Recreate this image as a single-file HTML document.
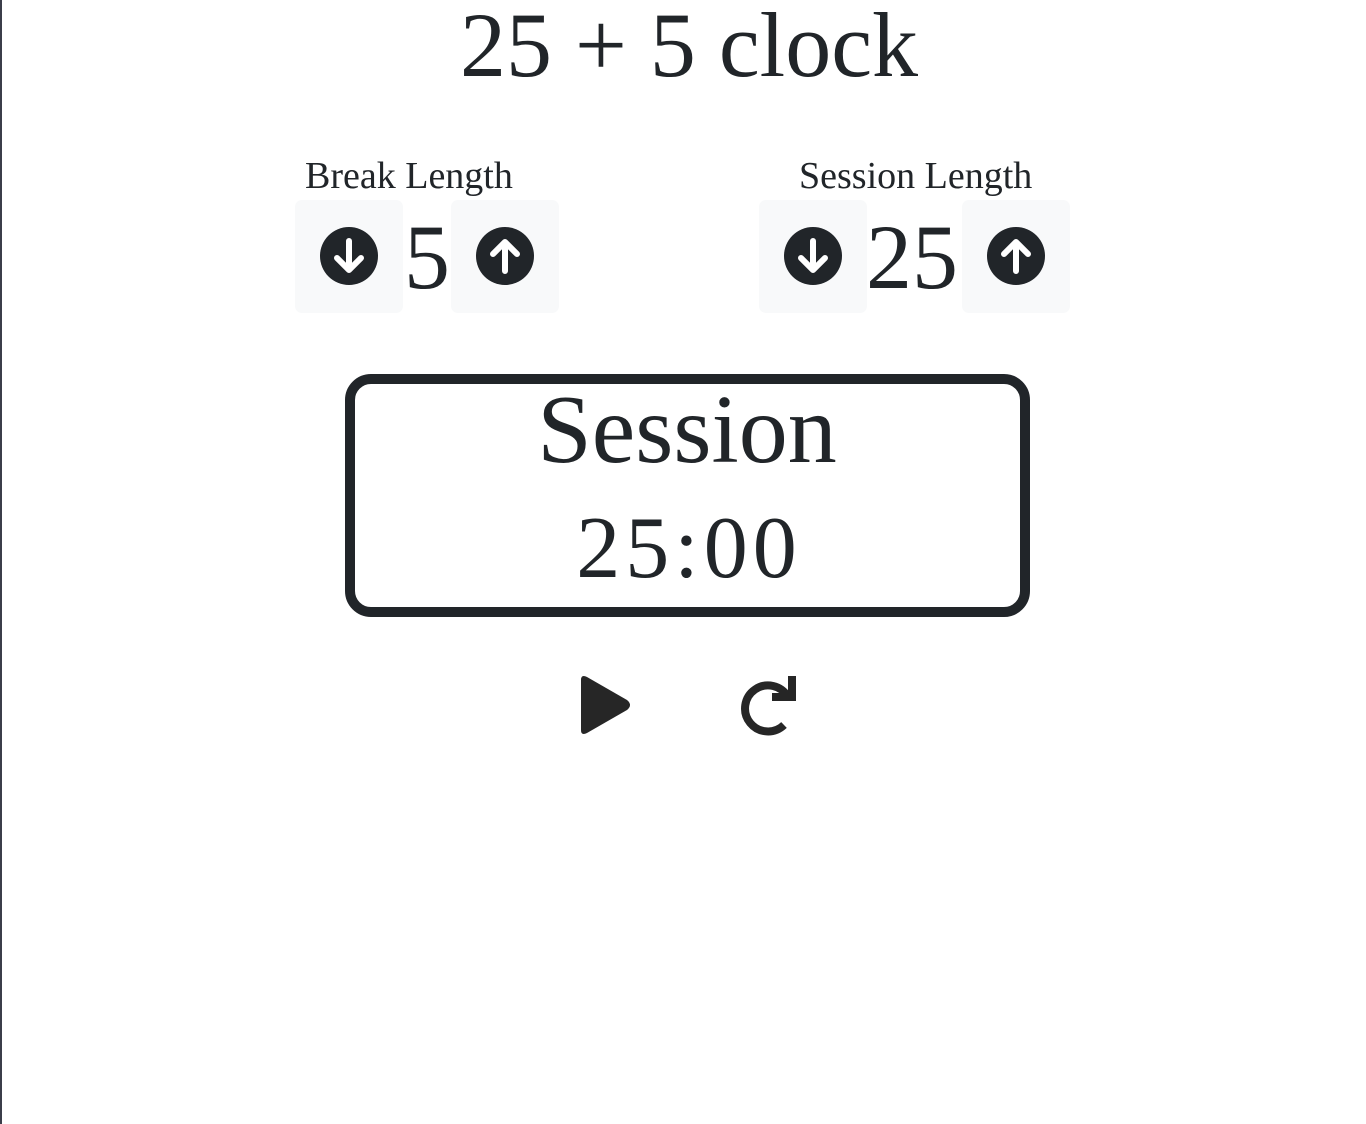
<!DOCTYPE html>
<html><head><meta charset="utf-8"><style>
html,body{margin:0;padding:0;width:1366px;height:1124px;overflow:hidden;background:#fff;color:#212529;font-family:"Liberation Serif","DejaVu Serif",serif;}
.a{position:absolute;white-space:nowrap;line-height:1;}
.edge{position:absolute;left:0;top:0;width:2px;height:1124px;background:#3b3e4a;}
.btn{position:absolute;width:108px;height:113px;top:200px;background:#f8f9fa;border-radius:7px;}
.btn svg{position:absolute;left:25px;top:27px;}
.box{position:absolute;left:345px;top:374px;width:665px;height:223px;border:10px solid #212529;border-radius:26px;}
</style></head><body>
<div class="edge"></div>
<div class="a" style="left:0;width:1378px;text-align:center;top:-1px;font-size:92px;">25 + 5 clock</div>
<div class="a" style="left:305px;top:157px;font-size:38px;">Break Length</div>
<div class="a" style="left:799px;top:157px;font-size:38px;">Session Length</div>

<div class="btn" style="left:295px"><svg width="58" height="58" viewBox="0 0 58 58"><circle cx="29" cy="29" r="29" fill="#212529"/><path d="M29 14V42M17 31L29 43L41 31" stroke="#fff" stroke-width="6" fill="none" stroke-linecap="round" stroke-linejoin="round"/></svg></div>
<div class="a" style="left:404px;top:211px;font-size:92px;">5</div>
<div class="btn" style="left:451px"><svg width="58" height="58" viewBox="0 0 58 58"><circle cx="29" cy="29" r="29" fill="#212529"/><path d="M29 44V16M17 27L29 15L41 27" stroke="#fff" stroke-width="6" fill="none" stroke-linecap="round" stroke-linejoin="round"/></svg></div>

<div class="btn" style="left:759px"><svg width="58" height="58" viewBox="0 0 58 58"><circle cx="29" cy="29" r="29" fill="#212529"/><path d="M29 14V42M17 31L29 43L41 31" stroke="#fff" stroke-width="6" fill="none" stroke-linecap="round" stroke-linejoin="round"/></svg></div>
<div class="a" style="left:866px;top:211px;font-size:92px;">25</div>
<div class="btn" style="left:962px"><svg width="58" height="58" viewBox="0 0 58 58"><circle cx="29" cy="29" r="29" fill="#212529"/><path d="M29 44V16M17 27L29 15L41 27" stroke="#fff" stroke-width="6" fill="none" stroke-linecap="round" stroke-linejoin="round"/></svg></div>

<div class="box"></div>
<div class="a" style="left:0;width:1374px;text-align:center;top:381px;font-size:98px;">Session</div>
<div class="a" style="left:0;width:1378px;text-align:center;top:505px;font-size:88px;letter-spacing:5px;">25:00</div>

<svg class="a" style="left:577px;top:674px" width="56" height="62" viewBox="0 0 56 62"><path d="M4 6Q4 0 10 3L50 26Q56 31 50 36L10 59Q4 62 4 56Z" fill="#262626"/></svg>
<svg class="a" style="left:734px;top:675px" width="64" height="62" viewBox="0 0 64 62"><path d="M50 50A23 23 0 1 1 54 22" stroke="#262626" stroke-width="8" fill="none"/><path d="M38 22H58V1" stroke="#262626" stroke-width="8" fill="none"/></svg>
</body></html>
